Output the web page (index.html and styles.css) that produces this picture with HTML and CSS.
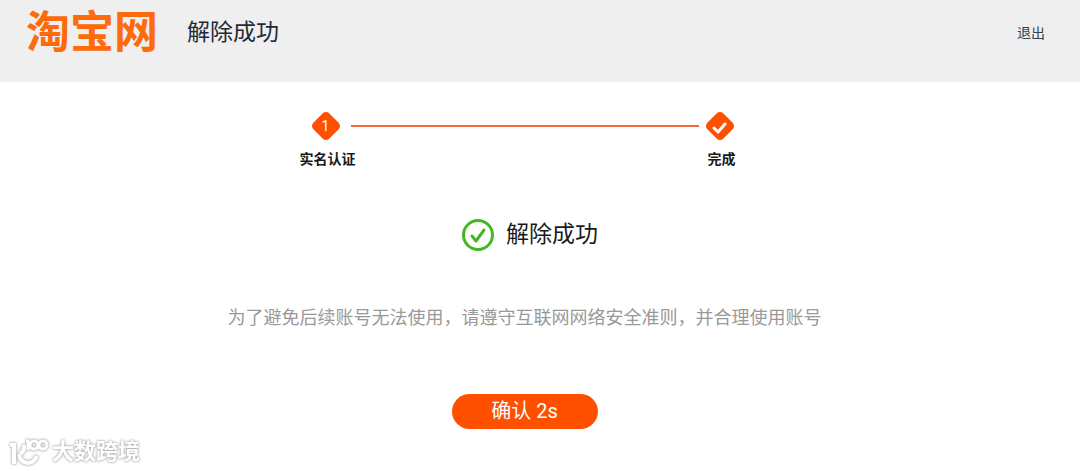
FILE: index.html
```
<!DOCTYPE html>
<html lang="zh-CN">
<head>
    <meta charset="UTF-8">
    <meta name="viewport" content="width=device-width, initial-scale=1.0">
    <title>解除成功</title>
    <link rel="stylesheet" href="styles.css">
</head>
<body>

    <header class="header">
        <a href="#" class="logo">淘宝网</a>
        <h1>解除成功</h1>
        <a href="#" class="logout">退出</a>
    </header>

    <main class="container">
        <div class="steps">
            <div class="step">
                <div class="marker">
                    <svg viewBox="0 0 30 30"><path d="M15 5.5 24.5 15 15 24.5 5.5 15Z"/></svg>
                    <span>1</span>
                </div>
                <p>实名认证</p>
            </div>
            <div class="line"></div>
            <div class="step">
                <div class="marker">
                    <svg viewBox="0 0 30 30">
                        <path d="M15 5.5 24.5 15 15 24.5 5.5 15Z"/>
                        <path class="tick" d="m9 17 4 4 7-8"/>
                    </svg>
                </div>
                <p>完成</p>
            </div>
        </div>

        <div class="result">
            <svg viewBox="0 0 32 32">
                <circle cx="16" cy="16" r="14.5"/>
                <path d="m10 17 4 5 8-11"/>
            </svg>
            <h2>解除成功</h2>
        </div>

        <p class="tip">为了避免后续账号无法使用，请遵守互联网网络安全准则，并合理使用账号</p>

        <button type="button" class="confirm">确认 2s</button>
    </main>

    <div class="watermark">
        <svg viewBox="0 0 40 28">
            <path d="M1 7h4v19M15 7v3c0 3-1 4-4 6M10 16c1 11 14 12 18 2"/>
            <path class="rings" d="M17 3h2v9M29 7a4 4 0 1 1-8 0 4 4 0 0 1 8 0M38 7a4 4 0 1 1-8 0 4 4 0 0 1 8 0"/>
        </svg>
        <span>大数跨境</span>
    </div>

</body>
</html>
```

FILE: styles.css
```
* { margin: 0; padding: 0; box-sizing: border-box; }
body { background: #fff; color: #1a1a1a; font-family: Roboto, "Noto Sans CJK SC", sans-serif; }
a { text-decoration: none; }

.header {
    display: flex; align-items: flex-start;
    padding: 9px 35px 25px 26px; background: #efefef;
}
.logo { font-size: 44px; line-height: 48px; font-weight: bold; color: #ff6a0a; }
.header h1 { margin-left: 29px; font-size: 23px; line-height: 48px; font-weight: normal; color: #1f2937; }
.logout { margin-left: auto; font-size: 14px; line-height: 48px; color: #374151; }

.container {
    display: flex; flex-direction: column; align-items: center;
    padding: 29px 31px 0 0;
}

.steps { display: flex; width: 450px; max-width: 100%; }
.step { width: 56px; text-align: center; }
.step p { margin-top: 8px; font-size: 14px; line-height: 20px; font-weight: bold; }
.marker { display: grid; place-items: center; width: 52px; height: 30px; }
.marker svg, .marker span { grid-area: 1 / 1; }
.marker svg {
    width: 30px; height: 30px;
    fill: #ff5000; stroke: #ff5000; stroke-width: 9; stroke-linejoin: round;
}
.marker .tick { fill: none; stroke: #fff; stroke-width: 3; stroke-linecap: round; }
.marker span { z-index: 1; font-size: 14px; color: #fff; }
.line { flex: 1; height: 2px; margin: 14px -5px 0; background: #f4683a; }

.result { display: flex; align-items: center; gap: 12px; margin-top: 48px; padding-left: 11px; }
.result svg {
    width: 32px; height: 32px;
    fill: none; stroke: #43b822; stroke-width: 3; stroke-linecap: round; stroke-linejoin: round;
}
.result h2 { font-size: 23px; line-height: 36px; font-weight: normal; }

.tip { margin-top: 52px; font-size: 18px; line-height: 26px; color: #999; }

.confirm {
    margin-top: 63px; width: 146px; height: 35px;
    border: none; border-radius: 18px; background: #ff5000; cursor: pointer;
    font-family: inherit; font-size: 20px; line-height: 35px; color: #fff;
}

.watermark {
    position: fixed; left: 9px; bottom: 5px;
    display: flex; align-items: center; gap: 3px;
    font-size: 22px; line-height: 28px; font-weight: bold; color: #fff;
    filter: drop-shadow(0 0 1px #aaa) drop-shadow(0 0 1px #ccc);
}
.watermark svg { width: 40px; height: 28px; fill: none; stroke: #fff; stroke-width: 4; }
.watermark .rings { stroke-width: 3; }
```
